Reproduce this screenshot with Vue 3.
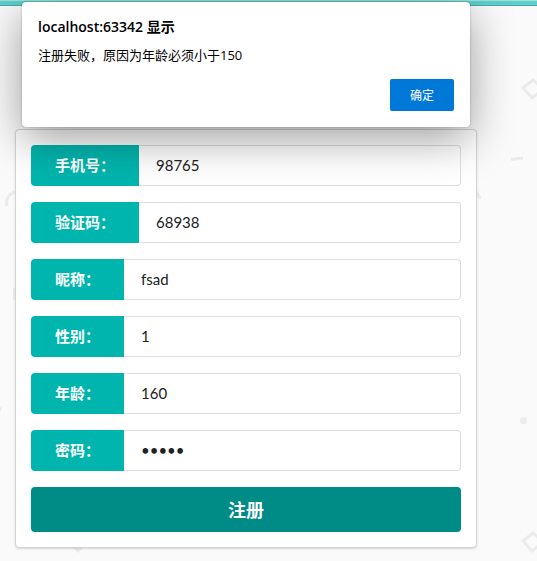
<script setup>
import { ref } from 'vue'

const fields = ref([
  { id: 'phone', label: '手机号：', type: 'text', value: '98765' },
  { id: 'code', label: '验证码：', type: 'text', value: '68938' },
  { id: 'nickname', label: '昵称：', type: 'text', value: 'fsad' },
  { id: 'gender', label: '性别：', type: 'text', value: '1' },
  { id: 'age', label: '年龄：', type: 'text', value: '160' },
  { id: 'password', label: '密码：', type: 'password', value: '12345' }
])
</script>

<template>
  <div class="page">
    <header class="topbar"></header>
    <svg class="pattern" width="537" height="561" viewBox="0 0 537 561" aria-hidden="true">
      <g fill="none" stroke="#ebebeb" stroke-width="3">
        <path d="M533 80L543 89L532 98L523 88Z" />
        <path d="M533 533L543 542L532 551L523 541Z" />
        <path d="M511 159.500L523 158" />
        <path d="M7 206C5 199 10 192 17 192" />
        <path d="M474 190Q478 192 480 199" />
      </g>
      <g fill="#ebebeb">
        <circle cx="523.500" cy="420.500" r="3.500" />
        <circle cx="-1" cy="409" r="2.500" />
        <rect x="13" y="288" width="5" height="12" />
        <path d="M72 547H84L78 553Z" />
      </g>
    </svg>
    <main class="content">
      <form class="card" @submit.prevent>
        <div v-for="field in fields" :key="field.id" class="field">
          <label class="field-label" :for="field.id">{{ field.label }}</label>
          <input :id="field.id" v-model="field.value" class="field-input" :type="field.type" autocomplete="off" />
        </div>
        <button class="submit" type="submit">注册</button>
      </form>
    </main>
    <section class="dialog" role="alertdialog" aria-labelledby="dialog-title" aria-describedby="dialog-message">
      <h1 id="dialog-title" class="dialog-title">localhost:63342 显示</h1>
      <p id="dialog-message" class="dialog-message">注册失败，原因为年龄必须小于150</p>
      <button class="dialog-ok" type="button">确定</button>
    </section>
  </div>
</template>

<style>
body {
  margin: 0;
  background: #fafafa;
}
</style>

<style scoped>
.page {
  position: relative;
  min-height: 100vh;
  overflow: hidden;
  font-family: Lato, "Noto Sans CJK SC", sans-serif;
}

.topbar {
  box-sizing: border-box;
  height: 6px;
  background: #5ccfcb;
  border-top: 1px solid #a3dfdc;
  border-bottom: 1px solid #48a9a7;
}

.pattern {
  position: absolute;
  top: 0;
  left: 0;
}

.content {
  position: relative;
  padding: 123px 60px 13px 15px;
}

.card {
  display: flex;
  flex-direction: column;
  gap: 16px;
  padding: 15px;
  background: #fff;
  border: 1px solid #d4d4d5;
  border-radius: 4px;
  box-shadow: 0 1px 2px rgba(34, 36, 38, 0.15);
}

.field {
  display: flex;
  height: 41px;
}

.field-label {
  padding: 0 24px;
  background: #00b5ad;
  border-radius: 4px 0 0 4px;
  color: #fff;
  font-size: 15px;
  font-weight: 700;
  line-height: 41px;
}

.field-input {
  box-sizing: border-box;
  flex: 1;
  min-width: 0;
  padding: 0 16px 2px;
  background: #fff;
  border: 1px solid #dededf;
  border-left-color: transparent;
  border-radius: 0 4px 4px 0;
  outline: 0;
  color: #212121;
  font-family: inherit;
  font-size: 15px;
}

.submit {
  height: 45px;
  padding: 0 0 2px;
  background: #008c86;
  border: 0;
  border-radius: 4px;
  color: #fff;
  font-family: inherit;
  font-size: 18px;
  font-weight: 700;
}

.dialog {
  position: absolute;
  top: 2px;
  left: 22px;
  right: 67px;
  display: flex;
  flex-direction: column;
  padding: 15px 16px 16px;
  background: #fff;
  border-radius: 4px;
  box-shadow: 0 0 2px rgba(0, 0, 0, 0.3), 0 12px 44px rgba(0, 0, 0, 0.38);
  color: #000;
  font-family: "Open Sans", "Noto Sans CJK SC", sans-serif;
  font-size: 13px;
}

.dialog-title {
  margin: 0;
  font-size: 14px;
  font-weight: 600;
  line-height: 20px;
}

.dialog-message {
  margin: 8px 0 0;
  line-height: 20px;
}

.dialog-ok {
  align-self: flex-end;
  width: 64px;
  height: 32px;
  margin-top: 14px;
  padding: 0;
  background: #0078d7;
  border: 0;
  border-radius: 2px;
  color: #fff;
  font-family: inherit;
  font-size: 12px;
}
</style>
